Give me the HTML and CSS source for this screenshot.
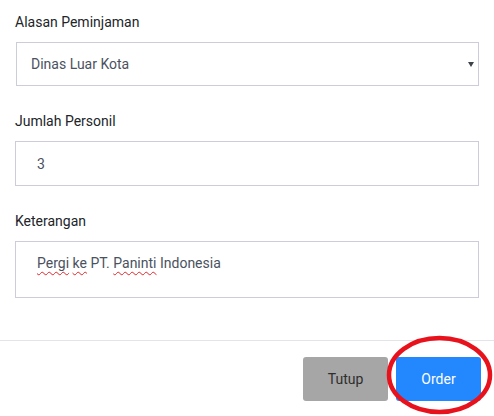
FILE: index.html
```html
<!DOCTYPE html>
<html>
<head>
<meta charset="utf-8">
<link rel="stylesheet" href="styles.css">
</head>
<body>
<div class="modal">
  <div class="modal-body">
    <div class="group">
      <div class="label">Alasan Peminjaman</div>
      <div class="control select">
        <span>Dinas Luar Kota</span>
        <svg class="caret" width="6" height="5" viewBox="0 0 6 5"><path d="M0 0H6L3 5Z" fill="#3d434a"/></svg>
      </div>
    </div>
    <div class="group">
      <div class="label">Jumlah Personil</div>
      <div class="control input">3</div>
    </div>
    <div class="group">
      <div class="label">Keterangan</div>
      <div class="control textarea"><span class="sp">Pergi</span> <span class="sp">ke</span> PT. <span class="sp">Paninti</span> Indonesia</div>
    </div>
  </div>
  <div class="modal-footer">
    <button class="btn btn-gray">Tutup</button>
    <div class="order-wrap">
      <button class="btn btn-blue">Order</button>
      <svg class="circle" width="110" height="82" viewBox="0 0 110 82"><ellipse cx="54.5" cy="40" rx="50.5" ry="37" fill="none" stroke="#e8121c" stroke-width="4.5"/></svg>
    </div>
  </div>
</div>
</body>
</html>
```
FILE: styles.css
```css
* { box-sizing: border-box; }
html, body { margin: 0; padding: 0; background: #fff; }
body {
  width: 494px;
  height: 416px;
  overflow: hidden;
  font-family: Roboto, "Liberation Sans", sans-serif;
  font-size: 14px;
  color: #212529;
}
.modal-body {
  padding: 12px 15px 0 15px;
  height: 340px;
}
.group { margin-bottom: 25px; }
.group:last-child { margin-bottom: 0; }
.label {
  line-height: 20px;
  height: 20px;
  margin-bottom: 10px;
  padding-left: 0;
}
.control {
  border: 1px solid #ccccdb;
  background: #fff;
  color: #4a5260;
  line-height: 20px;
  width: 464px;
}
.select {
  margin-left: 1px;
  width: 463px;
  height: 44px;
  display: flex;
  align-items: center;
  justify-content: space-between;
  padding: 0 4px 0 14px;
}
.select .caret { margin-right: 0; margin-top: 1px; }
.input {
  height: 45px;
  display: flex;
  align-items: center;
  padding-left: 21px;
}
.textarea {
  height: 57px;
  padding: 11px 21px;
}
.sp {
  text-decoration: underline wavy #e0262a;
  text-decoration-thickness: 1px;
  text-underline-offset: 3px;
  text-decoration-skip-ink: none;
}
.modal-footer {
  border-top: 1px solid #e2e4e8;
  display: flex;
  justify-content: flex-end;
  align-items: flex-start;
  gap: 8px;
  padding: 16px 13px 0 0;
}
.btn {
  font-family: Roboto, "Liberation Sans", sans-serif;
  font-size: 14px;
  width: 85px;
  height: 44px;
  border: none;
  border-radius: 3px;
  padding: 0;
  margin: 0;
}
.btn-gray { background: #a6a6a6; color: #2e2e2e; }
.btn-blue { background: #2388fe; color: #fff; display: block; }
.order-wrap { position: relative; }
.circle {
  position: absolute;
  left: -11px;
  top: -22px;
  pointer-events: none;
}
```
